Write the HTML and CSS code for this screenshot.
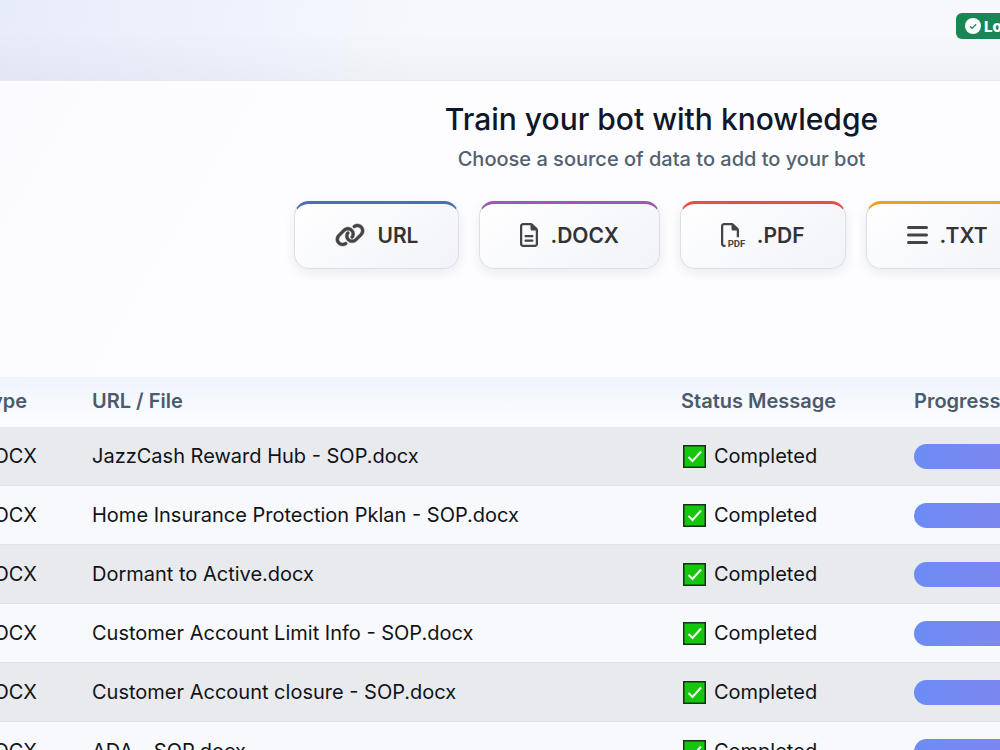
FILE: index.html
```html
<!DOCTYPE html>
<html lang="en">
<head>
<meta charset="utf-8">
<title>Train your bot</title>
<link rel="stylesheet" href="styles.css">
</head>
<body>
<header class="topbar">
  <span class="badge">
    <svg class="badge-icon" viewBox="0 0 16 16" aria-hidden="true"><circle cx="8" cy="8" r="8" fill="#fff"/><path d="M5 8.3l2.1 2.1 4-4.2" fill="none" stroke="#198754" stroke-width="1.3"/></svg>
    <span>Logged in</span>
  </span>
</header>
<main class="panel">
  <section class="intro">
    <h1 class="title">Train your bot with knowledge</h1>
    <p class="subtitle">Choose a source of data to add to your bot</p>
    <div class="sources">
      <button type="button" class="source source-url">
        <svg class="icon icon-wide" viewBox="0 0 640 512" aria-hidden="true"><path stroke="currentColor" stroke-width="10" d="M579.8 267.7c56.5-56.5 56.5-148 0-204.5c-50-50-128.8-56.5-186.3-15.4l-1.6 1.1c-14.4 10.3-17.7 30.3-7.4 44.6s30.3 17.7 44.6 7.4l1.6-1.1c32.1-22.9 76-19.3 103.8 8.6c31.5 31.5 31.5 82.5 0 114L422.3 334.8c-31.5 31.5-82.5 31.5-114 0c-27.9-27.9-31.5-71.8-8.6-103.8l1.1-1.6c10.3-14.4 6.9-34.4-7.4-44.6s-34.4-6.9-44.6 7.4l-1.1 1.6C206.5 251.2 213 330 263 380c56.5 56.5 148 56.5 204.5 0L579.8 267.7zM60.2 244.3c-56.5 56.5-56.5 148 0 204.5c50 50 128.8 56.5 186.3 15.4l1.6-1.1c14.4-10.3 17.7-30.3 7.4-44.6s-30.3-17.7-44.6-7.4l-1.6 1.1c-32.1 22.9-76 19.3-103.8-8.6C74 372 74 321 105.5 289.5L217.7 177.2c31.5-31.5 82.5-31.5 114 0c27.9 27.9 31.5 71.8 8.6 103.9l-1.1 1.6c-10.3 14.4-6.9 34.4 7.4 44.6s34.4 6.9 44.6-7.4l1.1-1.6C433.5 260.8 427 182 377 132c-56.5-56.5-148-56.5-204.5 0L60.2 244.3z"/></svg>
        <span>URL</span>
      </button>
      <button type="button" class="source source-docx">
        <svg class="icon icon-narrow" viewBox="0 0 384 512" aria-hidden="true"><path d="M64 464c-8.8 0-16-7.2-16-16V64c0-8.8 7.2-16 16-16H224v80c0 17.7 14.3 32 32 32h80V448c0 8.8-7.2 16-16 16H64zM64 0C28.7 0 0 28.7 0 64V448c0 35.3 28.7 64 64 64H320c35.3 0 64-28.7 64-64V154.5c0-17-6.7-33.3-18.7-45.3L274.7 18.7C262.7 6.7 246.5 0 229.5 0H64zm56 256c-13.3 0-24 10.7-24 24s10.7 24 24 24H264c13.3 0 24-10.7 24-24s-10.7-24-24-24H120zm0 96c-13.3 0-24 10.7-24 24s10.7 24 24 24H264c13.3 0 24-10.7 24-24s-10.7-24-24-24H120z"/></svg>
        <span>.DOCX</span>
      </button>
      <button type="button" class="source source-pdf">
        <svg class="icon" viewBox="0 0 512 512" aria-hidden="true"><path d="M64 464H96v48H64c-35.3 0-64-28.7-64-64V64C0 28.7 28.7 0 64 0H229.5c17 0 33.3 6.7 45.3 18.7l90.5 90.5c12 12 18.7 28.3 18.7 45.3V304H336V160H256c-17.7 0-32-14.3-32-32V48H64c-8.8 0-16 7.2-16 16V448c0 8.8 7.2 16 16 16z"/><text class="icon-text" x="142" y="510">PDF</text></svg>
        <span>.PDF</span>
      </button>
      <button type="button" class="source source-txt">
        <svg class="icon icon-bars" viewBox="0 0 448 512" aria-hidden="true"><path d="M32 96H416M32 256H416M32 416H416" fill="none" stroke="currentColor" stroke-width="64" stroke-linecap="round"/></svg>
        <span>.TXT</span>
      </button>
    </div>
  </section>
  <table class="files">
    <colgroup><col class="col-type"><col class="col-file"><col class="col-status"><col></colgroup>
    <thead>
      <tr><th scope="col">Type</th><th scope="col">URL / File</th><th scope="col">Status Message</th><th scope="col">Progress</th></tr>
    </thead>
    <tbody>
      <tr><td>DOCX</td><td>JazzCash Reward Hub - SOP.docx</td><td><span class="status"><svg class="check" viewBox="0 0 23 23" aria-hidden="true"><use href="#tick"/></svg>Completed</span></td><td><div class="progress"></div></td></tr>
      <tr><td>DOCX</td><td>Home Insurance Protection Pklan - SOP.docx</td><td><span class="status"><svg class="check" viewBox="0 0 23 23" aria-hidden="true"><use href="#tick"/></svg>Completed</span></td><td><div class="progress"></div></td></tr>
      <tr><td>DOCX</td><td>Dormant to Active.docx</td><td><span class="status"><svg class="check" viewBox="0 0 23 23" aria-hidden="true"><use href="#tick"/></svg>Completed</span></td><td><div class="progress"></div></td></tr>
      <tr><td>DOCX</td><td>Customer Account Limit Info - SOP.docx</td><td><span class="status"><svg class="check" viewBox="0 0 23 23" aria-hidden="true"><use href="#tick"/></svg>Completed</span></td><td><div class="progress"></div></td></tr>
      <tr><td>DOCX</td><td>Customer Account closure - SOP.docx</td><td><span class="status"><svg class="check" viewBox="0 0 23 23" aria-hidden="true"><use href="#tick"/></svg>Completed</span></td><td><div class="progress"></div></td></tr>
      <tr><td>DOCX</td><td>ADA - SOP.docx</td><td><span class="status"><svg class="check" viewBox="0 0 23 23" aria-hidden="true"><use href="#tick"/></svg>Completed</span></td><td><div class="progress"></div></td></tr>
    </tbody>
  </table>
</main>
<svg width="0" height="0" aria-hidden="true"><defs><g id="tick"><rect x="0.75" y="0.75" width="21.5" height="21.5" fill="#16c60c" stroke="#16301a" stroke-width="1.5"/><path d="M5.500 12l4 4 8.500-9.500" fill="none" stroke="#f4fff0" stroke-width="2"/></g></defs></svg>
</body>
</html>
```
FILE: styles.css
```css
* { box-sizing: border-box; }
body {
  margin: 0;
  height: 100vh;
  overflow: hidden;
  font-family: Inter, "Liberation Sans", sans-serif;
  font-size: 20px;
  color: #111317;
  background: #f7f8fc;
}
.topbar {
  display: flex;
  justify-content: flex-end;
  height: 80px;
  padding-top: 13px;
  background:
    linear-gradient(to bottom, transparent 40%, rgba(15, 23, 42, 0.03)),
    linear-gradient(100deg, #e7ecf9 0%, #f0f4fd 28%, #f7f8fc 42%);
}
.badge {
  display: flex;
  align-items: center;
  gap: 3px;
  height: 26px;
  margin-right: -64px;
  width: 108px;
  padding: 0 9px;
  border-radius: 6px;
  background: #198754;
  color: #fff;
  font-size: 15px;
  font-weight: 800;
  white-space: nowrap;
}
.badge-icon { width: 16px; height: 16px; flex: none; }
.panel {
  border-top: 1px solid #e6e8ee;
  background: linear-gradient(120deg, #fbfbff, #fdfdff 25%);
}
.intro {
  display: flex;
  flex-direction: column;
  align-items: center;
  padding: 19px 0 108px 323px;
}
.title { margin: 0; font-size: 30px; line-height: 38px; font-weight: 500; color: #0f172a; white-space: nowrap; }
.subtitle { margin: 7px 0 28px; font-size: 20px; line-height: 28px; font-weight: 500; color: #526071; white-space: nowrap; }
.sources { display: flex; gap: 20px; }
.source {
  display: flex;
  align-items: center;
  gap: 12px;
  flex: none;
  height: 68px;
  padding: 0 40px 2px;
  border: 1px solid #dcdfe6;
  border-top-width: 3px;
  border-radius: 15px;
  background: linear-gradient(145deg, #ffffff, #f1f3f9);
  box-shadow: 0 4px 12px rgba(15, 23, 42, 0.08);
  color: #333;
  font: 600 21px Inter, "Liberation Sans", sans-serif;
  white-space: nowrap;
}
.source-url { border-top-color: #4a6fb5; }
.source-docx { border-top-color: #9b59b6; }
.source-pdf { border-top-color: #e05247; }
.source-txt { border-top-color: #eba120; }
.icon { width: 24px; height: 24px; flex: none; fill: #444; color: #444; overflow: visible; }
.icon-wide { width: 30px; }
.icon-narrow { width: 18px; }
.icon-bars { width: 21px; }
.icon-text { font: 700 205px Roboto, "Liberation Sans", sans-serif; }
.files {
  width: calc(100% + 233px);
  margin-left: -33px;
  table-layout: fixed;
  border-collapse: separate;
  border-spacing: 0;
}
.col-type { width: 113px; }
.col-file { width: 589px; }
.col-status { width: 233px; }
th, td { padding: 0 12px; text-align: left; white-space: nowrap; }
th { height: 50px; padding-bottom: 2px; font-weight: 600; color: #4b5a6d; }
thead { background: linear-gradient(#f1f4fe, #fcfdff); }
td { height: 59px; border-bottom: 1px solid #e0e3e8; }
tbody tr { background: #f7f9fc; }
tbody tr:nth-child(odd) { background: #e8eaee; }
.status { display: flex; align-items: center; gap: 8px; padding-left: 2px; }
.check { width: 23px; height: 23px; flex: none; }
.progress {
  width: 250px;
  height: 25px;
  border-radius: 13px;
  background: linear-gradient(90deg, #6c8cf5, #9b7ce8);
}
```
